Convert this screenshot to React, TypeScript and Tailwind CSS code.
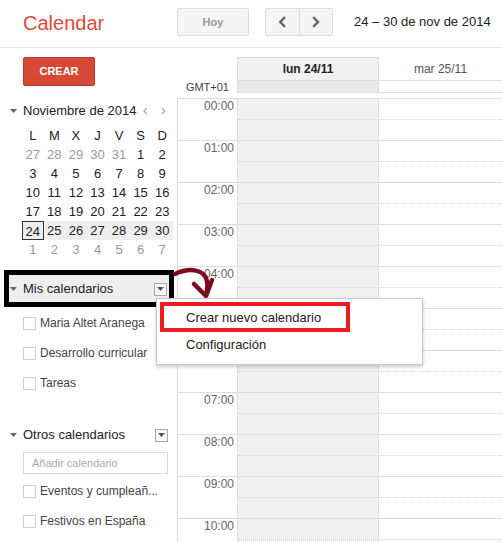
import React from "react";

const hours = ["00:00", "01:00", "02:00", "03:00", "04:00", "05:00", "06:00", "07:00", "08:00", "09:00", "10:00"];

const weekDays = ["L", "M", "X", "J", "V", "S", "D"];

// [day, outside-of-month]
const weeks: [string, boolean][][] = [
  [["27", true], ["28", true], ["29", true], ["30", true], ["31", true], ["1", false], ["2", false]],
  [["3", false], ["4", false], ["5", false], ["6", false], ["7", false], ["8", false], ["9", false]],
  [["10", false], ["11", false], ["12", false], ["13", false], ["14", false], ["15", false], ["16", false]],
  [["17", false], ["18", false], ["19", false], ["20", false], ["21", false], ["22", false], ["23", false]],
  [["24", false], ["25", false], ["26", false], ["27", false], ["28", false], ["29", false], ["30", false]],
  [["1", true], ["2", true], ["3", true], ["4", true], ["5", true], ["6", true], ["7", true]],
];

const Caret = () => (
  <svg width="7" height="4" viewBox="0 0 7 4" className="shrink-0">
    <path d="M0 0 L7 0 L3.5 4 Z" fill="#666" />
  </svg>
);

const DropBox = () => (
  <div className="flex h-[13px] w-[13px] items-center justify-center border border-[#a8a8a8] bg-[#f8f8f8]">
    <svg width="7" height="4" viewBox="0 0 7 4">
      <path d="M0 0 L7 0 L3.5 4 Z" fill="#555" />
    </svg>
  </div>
);

const CalItem = ({ label }: { label: string }) => (
  <div className="ml-[23px] flex h-[30px] items-center gap-[4px]">
    <div className="h-[13px] w-[13px] border border-[#cfcfcf] bg-white" />
    <span className="text-[12px] text-[#444]">{label}</span>
  </div>
);

const Chevron = ({ dir, size = 12, color = "#666", w = 2 }: { dir: "l" | "r"; size?: number; color?: string; w?: number }) => (
  <svg width={size * 0.6} height={size} viewBox="0 0 6 10">
    <polyline
      points={dir === "l" ? "5,1 1,5 5,9" : "1,1 5,5 1,9"}
      fill="none"
      stroke={color}
      strokeWidth={w}
    />
  </svg>
);

export default function App() {
  return (
    <div className="relative h-[542px] w-[502px] overflow-hidden bg-white font-['Liberation_Sans',Arial,sans-serif] text-[#222]">
      {/* top bar */}
      <div className="flex h-[48px] items-start border-b border-[#e5e5e5] pt-[8px]">
        <div className="ml-[23px] mt-[3px] w-[154px] text-[20px] leading-[24px] text-[#dd4b39]">Calendar</div>
        <div className="flex h-[28px] w-[72px] items-center justify-center rounded-[2px] border border-[#dcdcdc] bg-[#f5f5f5] text-[11px] font-bold text-[#999]">
          Hoy
        </div>
        <div className="ml-[16px] flex h-[28px] w-[68px] rounded-[2px] border border-[#dcdcdc] bg-[#f5f5f5]">
          <div className="flex w-[34px] items-center justify-center border-r border-[#dcdcdc]">
            <Chevron dir="l" />
          </div>
          <div className="flex flex-1 items-center justify-center">
            <Chevron dir="r" />
          </div>
        </div>
        <div className="ml-[21px] flex h-[28px] items-center text-[13px] text-[#222]">24 – 30 de nov de 2014</div>
      </div>

      <div className="flex">
        {/* sidebar */}
        <div className="w-[177px] shrink-0">
          <div className="ml-[23px] mt-[9px] flex h-[29px] w-[72px] items-center justify-center rounded-[2px] border border-[#c6322a] bg-[#d64937] text-[11px] font-bold text-white">
            CREAR
          </div>

          <div className="mt-[15px] flex h-[19px] items-center">
            <div className="ml-[10px] mr-[6px]">
              <Caret />
            </div>
            <span className="text-[13px] text-[#222]">Noviembre de 2014</span>
            <div className="ml-[7px] flex items-center">
              <Chevron dir="l" size={8} color="#999" w={1.3} />
            </div>
            <div className="ml-[13px] flex items-center">
              <Chevron dir="r" size={8} color="#999" w={1.3} />
            </div>
          </div>

          <div className="ml-[22px] mt-[6px] w-[151px]">
            <div className="grid grid-cols-7">
              {weekDays.map((d) => (
                <div key={d} className="h-[19px] text-center text-[13px] leading-[19px] text-[#222]">
                  {d}
                </div>
              ))}
            </div>
            {weeks.map((w, i) => (
              <div key={i} className={`grid grid-cols-7 ${i === 4 ? "bg-[#eeeeee]" : ""}`}>
                {w.map(([d, out], j) => (
                  <div
                    key={j}
                    className={`h-[19px] text-center text-[13px] leading-[19px] ${out ? "text-[#999]" : "text-[#222]"} ${
                      i === 4 && j === 0 ? "border border-[#333] leading-[17px]" : ""
                    }`}
                  >
                    {d}
                  </div>
                ))}
              </div>
            ))}
          </div>

          {/* Mis calendarios */}
          <div className="ml-[4px] mt-[11px] flex h-[37px] w-[170px] items-center border-[5px] border-black bg-[#eeeeee]">
            <div className="ml-[1px] mr-[6px]">
              <Caret />
            </div>
            <span className="flex-1 pt-[1px] text-[13px] text-[#222]">Mis calendarios</span>
            <div className="mr-[2px] mt-[1px]">
              <DropBox />
            </div>
          </div>

          <div className="mt-[1px]">
            <CalItem label="Maria Altet Aranega" />
            <CalItem label="Desarrollo curricular" />
            <CalItem label="Tareas" />
          </div>

          <div className="ml-[9px] mt-[27px] flex h-[20px] w-[160px] items-center">
            <div className="ml-[1px] mr-[6px]">
              <Caret />
            </div>
            <span className="flex-1 text-[13px] text-[#222]">Otros calendarios</span>
            <div className="mr-[1px]">
              <DropBox />
            </div>
          </div>

          <div className="ml-[23px] mt-[7px] flex h-[22px] w-[145px] items-center border border-[#d9d9d9] pl-[8px] text-[11px] text-[#aaa]">
            Añadir calendario
          </div>

          <div className="mt-[2px]">
            <CalItem label="Eventos y cumpleañ..." />
            <CalItem label="Festivos en España" />
          </div>
        </div>

        {/* week grid */}
        <div className="flex-1 pt-[9px]">
          <div className="flex">
            <div className="w-[60px] shrink-0" />
            <div className="flex flex-1 border-b border-[#dddddd]">
              <div className="flex h-[23px] w-[142px] items-center justify-center border-l border-r border-t border-[#dddddd] bg-[#f1f1f1] text-[12px] font-bold text-[#222]">
                lun 24/11
              </div>
              <div className="flex flex-1 items-center justify-center text-[12px] text-[#555]">mar 25/11</div>
            </div>
          </div>
          <div className="flex">
            <div className="w-[60px] shrink-0 pr-[8px] text-right text-[11px] leading-[12px] text-[#444]">GMT+01</div>
            <div className="flex h-[12px] flex-1 border-b border-[#dddddd]">
              <div className="w-[142px] border-l border-r border-[#dddddd] bg-[#e9e9e9]" />
              <div className="flex-1" />
            </div>
          </div>

          <div className="mt-[5px]">
            {hours.map((h) => (
              <div key={h} className="flex h-[42px] border-t border-[#dddddd]">
                <div className="w-[60px] shrink-0 border-l border-[#dddddd] pr-[3px] text-right text-[12px] leading-[14px] text-[#666]">
                  {h}
                </div>
                <div className="w-[141px] shrink-0 border-l border-[#dddddd] bg-[#f1f1f1]">
                  <div className="h-[21px] border-b border-dotted border-[#d4d4d4]" />
                </div>
                <div className="flex-1 border-l border-[#dddddd]">
                  <div className="h-[21px] border-b border-dotted border-[#d4d4d4]" />
                </div>
              </div>
            ))}
          </div>
        </div>
      </div>

      {/* annotation arrow */}
      <svg className="pointer-events-none absolute left-0 top-0" width="502" height="542">
        <path
          d="M175 274 C 188 268, 204 268, 207 281 C 208 286, 207 291, 206 295"
          fill="none"
          stroke="#7a0b1d"
          strokeWidth="4.5"
          strokeLinecap="round"
        />
        <path
          d="M194 284 L206 296 L212 280"
          fill="none"
          stroke="#7a0b1d"
          strokeWidth="4.5"
          strokeLinecap="round"
          strokeLinejoin="round"
        />
      </svg>

      {/* dropdown menu */}
      <div className="absolute left-[156px] top-[298px] w-[267px] border border-[#c8c8c8] bg-white pb-[6px] pt-[5px] shadow-[0_2px_4px_rgba(0,0,0,0.2)]">
        <div className="flex h-[27px] items-center pl-[29px] text-[13px] text-[#222]">Crear nuevo calendario</div>
        <div className="flex h-[27px] items-center pl-[29px] text-[13px] text-[#222]">Configuración</div>
      </div>
      <div className="pointer-events-none absolute left-[160px] top-[302px] h-[30px] w-[190px] border-[4px] border-[#ed1c24]" />
    </div>
  );
}
